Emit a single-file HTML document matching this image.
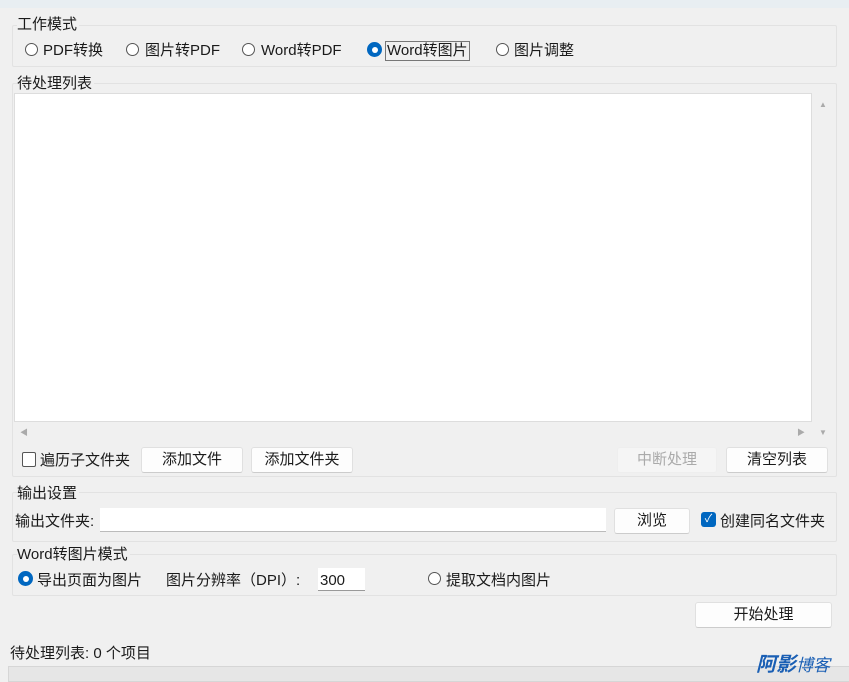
<!DOCTYPE html><html><head><meta charset="utf-8"><style>
body{margin:0;width:849px;height:680px;background:#f0f0f0;position:relative;overflow:hidden;font-family:"Liberation Sans","Noto Sans CJK SC",sans-serif;font-size:15px;color:#1a1a1a}
.a{position:absolute}
.grp{position:absolute;border:1px solid #e2e2e2;border-radius:2px}
.t{position:absolute;white-space:nowrap;line-height:18px}
.btn{position:absolute;background:#fdfdfd;border:1px solid #e0e0e0;border-bottom-color:#ccc;border-radius:3px;text-align:center;line-height:24px;font-size:15px}
.r{position:absolute;width:13px;height:13px;border:1px solid #555;border-radius:50%;background:#fff;box-sizing:border-box}
.rs{position:absolute;width:15px;height:15px;border-radius:50%;background:#0067c0;box-sizing:border-box}
.rs:after{content:"";position:absolute;left:4.5px;top:4.5px;width:6px;height:6px;border-radius:50%;background:#fff}
</style></head><body>
<div class="a" style="left:0;top:0;width:849px;height:8px;background:#e8eef2"></div>
<div class="grp" style="left:12px;top:25px;width:823px;height:40px"></div>
<div class="t" style="left:17px;top:16px;background:#f0f0f0;padding-right:2px">工作模式</div>
<div class="r" style="left:25px;top:43px"></div><div class="t" style="left:43px;top:42px">PDF转换</div>
<div class="r" style="left:126px;top:43px"></div><div class="t" style="left:145px;top:42px">图片转PDF</div>
<div class="r" style="left:242px;top:43px"></div><div class="t" style="left:261px;top:42px">Word转PDF</div>
<div class="rs" style="left:367px;top:42px"></div><div class="t" style="left:385px;top:41px;border:1px solid #777;padding:0 1px">Word转图片</div>
<div class="r" style="left:496px;top:43px"></div><div class="t" style="left:514px;top:42px">图片调整</div>

<div class="grp" style="left:12px;top:83px;width:823px;height:392px"></div>
<div class="t" style="left:17px;top:75px;background:#f0f0f0;padding-right:2px">待处理列表</div>
<div class="a" style="left:14px;top:93px;width:798px;height:329px;background:#fff;border:1px solid #ddd;box-sizing:border-box"></div>
<div class="t" style="left:819px;top:96px;font-size:8px;color:#aaa">▲</div>
<div class="t" style="left:819px;top:424px;font-size:8px;color:#aaa">▼</div>
<div class="t" style="left:20px;top:424px;font-size:8px;color:#aaa">◀</div>
<div class="t" style="left:797px;top:424px;font-size:8px;color:#aaa">▶</div>
<div class="a" style="left:22px;top:452px;width:14px;height:15px;border:1px solid #555;border-radius:2px;background:#fff;box-sizing:border-box"></div>
<div class="t" style="left:40px;top:452px">遍历子文件夹</div>
<div class="btn" style="left:141px;top:447px;width:100px">添加文件</div>
<div class="btn" style="left:251px;top:447px;width:100px">添加文件夹</div>
<div class="btn" style="left:617px;top:447px;width:98px;color:#aaa;background:#f5f5f5;border-color:#eee">中断处理</div>
<div class="btn" style="left:726px;top:447px;width:100px">清空列表</div>

<div class="grp" style="left:12px;top:492px;width:823px;height:48px"></div>
<div class="t" style="left:17px;top:485px;background:#f0f0f0;padding-right:2px">输出设置</div>
<div class="t" style="left:15px;top:513px">输出文件夹:</div>
<div class="a" style="left:100px;top:508px;width:506px;height:23px;background:#fff;border-bottom:1px solid #bbb"></div>
<div class="btn" style="left:614px;top:508px;width:74px">浏览</div>
<div class="a" style="left:701px;top:512px;width:15px;height:15px;background:#0067c0;border-radius:3px;color:#fff;font-size:11px;text-align:center;line-height:15px">✓</div>
<div class="t" style="left:720px;top:513px">创建同名文件夹</div>

<div class="grp" style="left:12px;top:554px;width:823px;height:40px"></div>
<div class="t" style="left:17px;top:546px;background:#f0f0f0;padding-right:2px">Word转图片模式</div>
<div class="rs" style="left:18px;top:571px"></div><div class="t" style="left:37px;top:572px">导出页面为图片</div>
<div class="t" style="left:166px;top:572px">图片分辨率（DPI）:</div>
<div class="a" style="left:318px;top:568px;width:47px;height:22px;background:#fff;border-bottom:1px solid #999"></div>
<div class="t" style="left:320px;top:572px">300</div>
<div class="r" style="left:428px;top:572px"></div><div class="t" style="left:446px;top:572px">提取文档内图片</div>

<div class="btn" style="left:695px;top:602px;width:135px">开始处理</div>
<div class="t" style="left:10px;top:645px">待处理列表: 0 个项目</div>
<div class="a" style="left:8px;top:666px;width:841px;height:14px;background:#e6e6e6;border:1px solid #d6d6d6"></div>
<div class="t" style="left:756px;top:656px;font-size:20px;font-weight:bold;font-style:italic;color:#1a5fb4">阿影<span style="font-size:17px;font-weight:normal">博客</span></div>
</body></html>
